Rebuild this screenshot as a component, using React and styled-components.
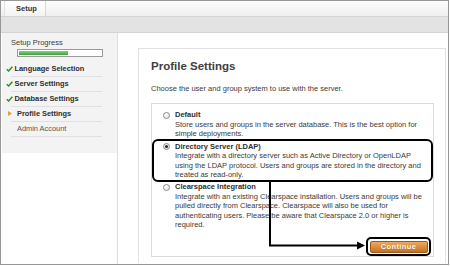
import React from 'react';
import styled, { createGlobalStyle } from 'styled-components';

const Global = createGlobalStyle`
  html, body { margin: 0; padding: 0; background: #fff; }
  body { font-family: "Liberation Sans", Arial, sans-serif; }
  #root { width: 450px; height: 266px; }
`;

const Frame = styled.div`
  position: relative;
  box-sizing: border-box;
  width: 449px;
  height: 265px;
  border: 1px solid #979797;
  background: #fff;
  display: flex;
  flex-direction: column;
  overflow: hidden;
`;

const TopBar = styled.div`
  height: 15px;
  flex: none;
  display: flex;
  background: linear-gradient(#fdfdfd, #efefef);
  border-bottom: 1px solid #d4d4d4;
`;

const Tab = styled.div`
  margin-left: 3px;
  padding: 0 8px 0 11px;
  border-left: 1px solid #e2e2e2;
  border-right: 1px solid #d6d6d6;
  line-height: 15px;
  font-size: 7.5px;
  font-weight: bold;
  color: #333;
  background: linear-gradient(#ffffff, #f3f3f3);
`;

const SubBar = styled.div`
  height: 15px;
  flex: none;
  background: #e3e3e3;
  border-bottom: 1px solid #d3d3d3;
`;

const Content = styled.div`
  flex: 1;
  display: flex;
  min-height: 0;
`;

const Sidebar = styled.div`
  width: 116px;
  flex: none;
`;

const SideBox = styled.div`
  margin-left: 1px;
  background: #f3f3f3;
  padding: 5px 0 16.5px 4px;
`;

const SideTitle = styled.div`
  padding-left: 5px;
  font-size: 7.5px;
  line-height: 10px;
  color: #3c3c3c;
`;

const Progress = styled.div`
  margin: 1px 0 0 11px;
  box-sizing: border-box;
  width: 86px;
  height: 8px;
  border: 1px solid #9a9a9a;
  background: #fff;
  padding: 1px;
`;

const ProgressFill = styled.div`
  height: 100%;
  background: linear-gradient(#86d37a, #3e9e3e);
`;

const StepList = styled.div`
  margin: 4.5px 0 0 5px;
  width: 91px;
`;

const Step = styled.div`
  height: 14px;
  border-bottom: 1px solid #e0e0e0;
  display: flex;
  align-items: center;
  padding-left: ${p => (p.$pad || 0)}px;
  font-size: 7.4px;
  font-weight: ${p => (p.$plain ? 'normal' : 'bold')};
  color: ${p => (p.$plain ? '#555' : '#2e2e2e')};
  white-space: nowrap;
`;

const CheckIcon = styled.svg`
  margin-left: -5px;
  width: 7px;
  height: 6px;
  flex: none;
  margin-right: 1.5px;
`;

const ArrowIcon = styled.svg`
  margin-left: -3px;
  width: 4px;
  height: 5px;
  flex: none;
  margin-right: 5px;
`;

const Main = styled.div`
  flex: 1;
  box-sizing: border-box;
  border-left: 1px solid #dedede;
  padding: 15px 2px 1px 20px;
  display: flex;
  flex-direction: column;
`;

const Panel = styled.div`
  flex: 1;
  border: 1px solid #e2e2e2;
  border-bottom: none;
  padding: 10px 11px 0 12px;
  background: #fff;
`;

const Heading = styled.h1`
  margin: 0 0 11px;
  font-size: 11.5px;
  line-height: 14px;
  font-weight: bold;
  color: #404040;
`;

const Intro = styled.p`
  margin: 0 0 9px;
  font-size: 7.5px;
  line-height: 10px;
  color: #3a3a3a;
  white-space: nowrap;
`;

const OptionsBox = styled.div`
  border: 1px solid #dcdcdc;
  padding: 6px 0 0 0;
`;

const Option = styled.div`
  display: flex;
  gap: 5px;
  padding: ${p => (p.$highlight ? '1px 4px 0.5px 9px' : '0 4px 0 11px')};
  border: ${p => (p.$highlight ? '2px solid #000' : 'none')};
  border-radius: 6px;
`;

const Radio = styled.span`
  box-sizing: border-box;
  width: 7px;
  height: 7px;
  margin-top: 1.5px;
  flex: none;
  border-radius: 50%;
  border: 1px solid #8a8a8a;
  background: radial-gradient(circle at 40% 35%, #fff, #dcdcdc);
  display: flex;
  align-items: center;
  justify-content: center;
  &::after {
    content: '';
    width: 3px;
    height: 3px;
    border-radius: 50%;
    background: ${p => (p.$checked ? '#222' : 'transparent')};
  }
`;

const OptionText = styled.div`
  font-size: 7.5px;
  line-height: 9.5px;
  white-space: nowrap;
`;

const OptionTitle = styled.div`
  font-weight: bold;
  color: #2e2e2e;
`;

const OptionDesc = styled.div`
  color: #3a3a3a;
`;

const Footer = styled.div`
  display: flex;
  justify-content: flex-end;
  padding-right: 2px;
  margin-top: 7.5px;
`;

const Outline = styled.div`
  border: 2px solid #000;
  border-radius: 5px;
  padding: 1.5px;
  display: flex;
`;

const Button = styled.button`
  box-sizing: border-box;
  width: 58px;
  height: 12px;
  padding: 0;
  border: 1px solid #9c5a1a;
  border-radius: 2px;
  background: linear-gradient(#eeaa62, #c6721f);
  color: #fff;
  font-family: "Liberation Sans", Arial, sans-serif;
  font-size: 7.5px;
  font-weight: bold;
  letter-spacing: 0.4px;
  line-height: 10px;
  text-shadow: 0 0 1px rgba(120, 60, 0, 0.6);
`;

const Overlay = styled.svg`
  position: absolute;
  left: -1px;
  top: -1px;
  width: 450px;
  height: 266px;
  pointer-events: none;
`;

const steps = [
  { label: 'Language Selection', state: 'done' },
  { label: 'Server Settings', state: 'done' },
  { label: 'Database Settings', state: 'done' },
  { label: 'Profile Settings', state: 'current' },
  { label: 'Admin Account', state: 'todo' },
];

const options = [
  {
    title: 'Default',
    lines: [
      'Store users and groups in the server database. This is the best option for',
      'simple deployments.',
    ],
  },
  {
    title: 'Directory Server (LDAP)',
    checked: true,
    lines: [
      'Integrate with a directory server such as Active Directory or OpenLDAP',
      'using the LDAP protocol. Users and groups are stored in the directory and',
      'treated as read-only.',
    ],
  },
  {
    title: 'Clearspace Integration',
    lines: [
      'Integrate with an existing Clearspace installation. Users and groups will be',
      'pulled directly from Clearspace. Clearspace will also be used for',
      'authenticating users. Please be aware that Clearspace 2.0 or higher is',
      'required.',
    ],
  },
];

function StepItem({ label, state }) {
  if (state === 'done') {
    return (
      <Step>
        <CheckIcon viewBox="0 0 7 6">
          <path d="M0.8 3.3 L2.6 5 L6.4 0.7" fill="none" stroke="#2f8a2a" strokeWidth="1.4" />
        </CheckIcon>
        {label}
      </Step>
    );
  }
  if (state === 'current') {
    return (
      <Step>
        <ArrowIcon viewBox="0 0 4 5">
          <polygon points="0,0 4,2.5 0,5" fill="#e0a22a" />
        </ArrowIcon>
        {label}
      </Step>
    );
  }
  return (
    <Step $plain $pad={6}>
      {label}
    </Step>
  );
}

export default function App() {
  return (
    <>
      <Global />
      <Frame>
        <TopBar>
          <Tab>Setup</Tab>
        </TopBar>
        <SubBar />
        <Content>
          <Sidebar>
            <SideBox>
              <SideTitle>Setup Progress</SideTitle>
              <Progress>
                <ProgressFill style={{ width: '60%' }} />
              </Progress>
              <StepList>
                {steps.map(s => (
                  <StepItem key={s.label} {...s} />
                ))}
              </StepList>
            </SideBox>
          </Sidebar>
          <Main>
            <Panel>
              <Heading>Profile Settings</Heading>
              <Intro>Choose the user and group system to use with the server.</Intro>
              <OptionsBox>
                {options.map(o => (
                  <Option key={o.title} $highlight={o.checked}>
                    <Radio $checked={o.checked} />
                    <OptionText>
                      <OptionTitle>{o.title}</OptionTitle>
                      {o.lines.map(l => (
                        <OptionDesc key={l}>{l}</OptionDesc>
                      ))}
                    </OptionText>
                  </Option>
                ))}
                <Footer>
                  <Outline>
                    <Button>Continue</Button>
                  </Outline>
                </Footer>
              </OptionsBox>
            </Panel>
          </Main>
        </Content>
        <Overlay viewBox="0 0 450 266">
          <path d="M270 182 V245.5 H359" fill="none" stroke="#000" strokeWidth="2" />
          <polygon points="357,241.5 365,245.5 357,249.5" fill="#000" />
        </Overlay>
      </Frame>
    </>
  );
}
